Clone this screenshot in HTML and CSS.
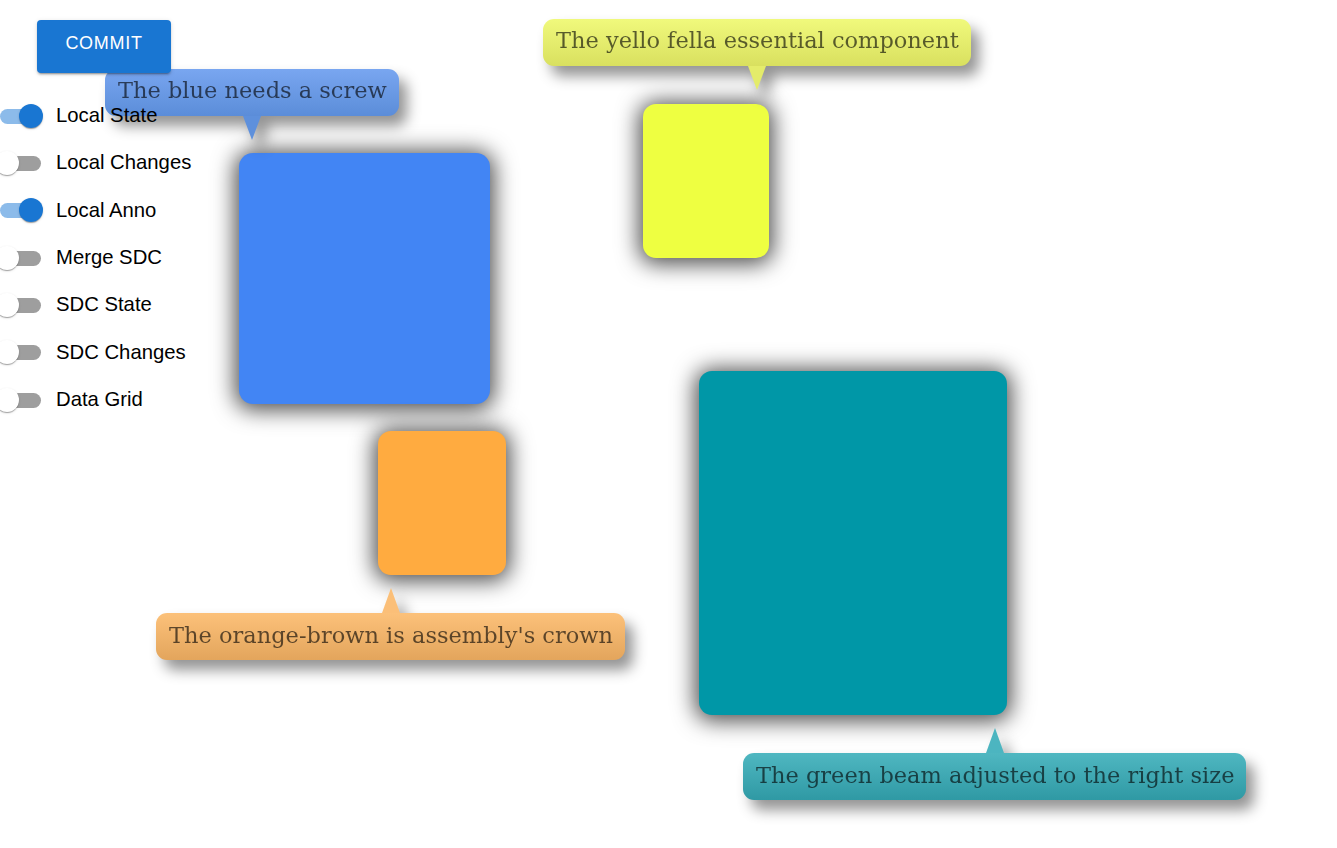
FILE: index.html
```html
<!DOCTYPE html>
<html>
<head>
<meta charset="utf-8">
<link rel="stylesheet" href="styles.css">
</head>
<body>
<div class="sidebar">
  <button class="commit">COMMIT</button>
  <ul class="toggles">
    <li class="row on"><span class="switch"><span class="track"></span><span class="thumb"></span></span><span class="label">Local State</span></li>
    <li class="row"><span class="switch"><span class="track"></span><span class="thumb"></span></span><span class="label">Local Changes</span></li>
    <li class="row on"><span class="switch"><span class="track"></span><span class="thumb"></span></span><span class="label">Local Anno</span></li>
    <li class="row"><span class="switch"><span class="track"></span><span class="thumb"></span></span><span class="label">Merge SDC</span></li>
    <li class="row"><span class="switch"><span class="track"></span><span class="thumb"></span></span><span class="label">SDC State</span></li>
    <li class="row"><span class="switch"><span class="track"></span><span class="thumb"></span></span><span class="label">SDC Changes</span></li>
    <li class="row"><span class="switch"><span class="track"></span><span class="thumb"></span></span><span class="label">Data Grid</span></li>
  </ul>
</div>

<div class="canvas">
  <div class="box box-blue"></div>
  <div class="box box-yellow"></div>
  <div class="box box-orange"></div>
  <div class="box box-teal"></div>

  <div class="callout callout-blue down"><div class="bubble">The blue needs a screw</div><span class="tail"></span></div>
  <div class="callout callout-yellow down"><div class="bubble">The yello fella essential component</div><span class="tail"></span></div>
  <div class="callout callout-orange up"><span class="tail"></span><div class="bubble">The orange-brown is assembly's crown</div></div>
  <div class="callout callout-teal up"><span class="tail"></span><div class="bubble">The green beam adjusted to the right size</div></div>
</div>
</body>
</html>
```

FILE: styles.css
```css
html, body {
  margin: 0;
  padding: 0;
  background: #fff;
  width: 1337px;
  height: 848px;
  overflow: hidden;
}

.sidebar {
  position: relative;
  z-index: 5;
  padding-top: 20px;
  width: 220px;
}

.commit {
  display: block;
  margin-left: 37px;
  width: 134px;
  height: 53px;
  border: none;
  border-radius: 4px;
  background: #1976d2;
  color: #fff;
  font-family: "Liberation Sans", Arial, sans-serif;
  font-size: 18px;
  font-weight: 400;
  letter-spacing: 0.7px;
  box-shadow: 0 3px 1px -2px rgba(0,0,0,.2), 0 2px 2px 0 rgba(0,0,0,.14), 0 1px 5px 0 rgba(0,0,0,.12);
  padding: 0 0 6px;
}

.toggles {
  list-style: none;
  margin: 19px 0 0;
  padding: 0;
}

.row {
  display: flex;
  align-items: center;
  height: 47.33px;
}

.switch {
  position: relative;
  width: 44px;
  height: 26px;
  flex: none;
}

.track {
  position: absolute;
  left: 0;
  top: 6px;
  width: 41px;
  height: 15px;
  border-radius: 8px;
  background: #9e9e9e;
}

.thumb {
  position: absolute;
  left: -5px;
  top: 1px;
  width: 24px;
  height: 24px;
  border-radius: 50%;
  background: #fff;
  box-shadow: 0 2px 1px -1px rgba(0,0,0,.2), 0 1px 1px 0 rgba(0,0,0,.14), 0 1px 3px 0 rgba(0,0,0,.12);
}

.row.on .track { background: #8cbbea; }
.row.on .thumb { left: 19px; background: #1976d2; }

.label {
  margin-left: 12px;
  font-family: "Liberation Sans", Arial, sans-serif;
  font-size: 20.3px;
  color: #000;
  white-space: nowrap;
}

.canvas {
  position: absolute;
  inset: 0;
  z-index: 1;
}

.box {
  position: absolute;
  border-radius: 13px;
  box-shadow: 0 2px 22px 4px rgba(0,0,0,0.7);
}
.box-blue { left: 239px; top: 153px; width: 251px; height: 251px; background: #4285f4; border-radius: 14px; }
.box-yellow { left: 643px; top: 104px; width: 126px; height: 154px; background: #eeff41; }
.box-orange { left: 378px; top: 431px; width: 128px; height: 144px; background: #ffab40; }
.box-teal { left: 699px; top: 371px; width: 308px; height: 344px; background: #0097a7; }

.callout {
  position: absolute;
  display: flex;
  flex-direction: column;
  align-items: center;
  filter: drop-shadow(8px 10px 7px rgba(0,0,0,0.42));
}

.bubble {
  box-sizing: border-box;
  height: 47px;
  padding: 0 13px;
  display: flex;
  align-items: center;
  border-radius: 11px;
  font-family: "DejaVu Serif", serif;
  font-size: 22.5px;
  color: rgba(0,0,0,0.62);
  white-space: nowrap;
  align-self: stretch;
}

.tail {
  width: 0;
  height: 0;
  border-left: 9px solid transparent;
  border-right: 9px solid transparent;
}
.down .tail { border-top: 24px solid var(--tail); }
.up .tail { border-bottom: 25px solid var(--tail); }
.down .bubble { padding-bottom: 6px; }
.up .bubble { padding-bottom: 4px; }

.callout-blue { left: 105px; top: 69px; width: 294px; --tail: #5e90dc; }
.callout-blue .bubble { background: linear-gradient(#79a6f0, #5b8dd9); }

.callout-yellow { left: 543px; top: 19px; width: 428px; --tail: #e4ec6a; }
.callout-yellow .bubble { background: linear-gradient(#f0f97c, #d9e05f); }

.callout-orange { left: 156px; top: 588px; width: 469px; --tail: #fbbf78; }
.callout-orange .bubble { background: linear-gradient(#fcc17a, #e3a55c); }

.callout-teal { left: 743px; top: 728px; width: 503px; --tail: #4cb5c0; }
.callout-teal .bubble { background: linear-gradient(#4fb7c1, #2f99a4); }
```
